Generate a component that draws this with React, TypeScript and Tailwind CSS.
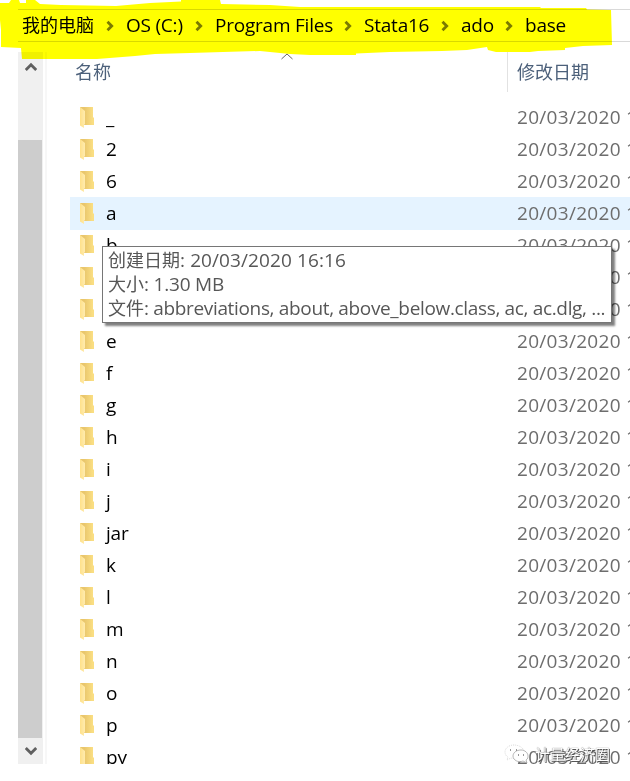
const FOLDERS = [
  "_", "2", "6", "a", "b", "c", "d", "e", "f", "g", "h",
  "i", "j", "jar", "k", "l", "m", "n", "o", "p", "py",
];

const CRUMBS = [
  { label: "OS (C:)", width: "w-[58px]" },
  { label: "Program Files", width: "w-[118px]" },
  { label: "Stata16", width: "w-[66px]" },
  { label: "ado", width: "w-[33px]" },
  { label: "base", width: "w-[40px]" },
];

function Separator() {
  return (
    <svg width="31" height="12" viewBox="0 0 31 12" className="shrink-0">
      <path d="M12.5 1.8 16.7 6l-4.2 4.2" fill="none" stroke="#7b7b7b" strokeWidth="2.8" />
    </svg>
  );
}

function Folder() {
  return (
    <svg width="15" height="22" viewBox="0 0 15 22" className="shrink-0">
      <defs>
        <linearGradient id="back" x1="0" x2="1">
          <stop offset="0.3" stopColor="#e9c66c" />
          <stop offset="0.9" stopColor="#fade82" />
        </linearGradient>
        <linearGradient id="front" x1="0" x2="1">
          <stop offset="0" stopColor="#ffe18a" />
          <stop offset="1" stopColor="#ffebae" />
        </linearGradient>
      </defs>
      <path d="M0 0h13v10l1 1v7H3z" fill="url(#back)" />
      <path d="M0 0 5 4v13.500H4V21l-4-2.500z" fill="url(#front)" />
    </svg>
  );
}

function Arrow({ down = false }: { down?: boolean }) {
  return (
    <svg width="12" height="10" viewBox="0 0 12 10" className={down ? "rotate-180" : ""}>
      <path d="M.8 8 6 2.8 11.2 8" fill="none" stroke="#606060" strokeWidth="2.8" />
    </svg>
  );
}

function AddressBar() {
  return (
    <div className="ml-[18px] mt-[9px] flex h-[33px] shrink-0 items-center whitespace-nowrap border-y border-[#d9d9d9] pl-1 text-[19px] text-black">
      <span className="w-[73px] shrink-0 text-[18px]">我的电脑</span>
      {CRUMBS.map(({ label, width }) => (
        <div key={label} className="flex shrink-0 items-center">
          <Separator />
          <span className={`${width} tracking-[-0.22px]`}>{label}</span>
        </div>
      ))}
    </div>
  );
}

function Highlighter() {
  return (
    <svg width="630" height="64" viewBox="0 0 630 64" className="pointer-events-none absolute left-0 top-0 mix-blend-multiply">
      <path
        fill="#ffff00"
        d="M0 3H9L11 0H19L20 3H26V0H35L40 4L61 5L116 6L150 3L181 1.500V0H220L221 4L270 5L300 7H540L541 8H586L587 9.500L611 10L612 45L583 46L565 48V50L538 51L530 52H496L488 50L487 47L467 50L442 51L390 52L356 53.500V55H310L290 54L260 51L190 53L155 54L135 56L97 59H22L21 48L1 47V30L0 20Z"
      />
    </svg>
  );
}

function ScrollBar() {
  return (
    <div className="flex w-[25px] shrink-0 flex-col bg-[#f0f0f0]">
      <div className="flex h-[88px] justify-center pt-[10px]"><Arrow /></div>
      <div className="h-[598px] w-6 bg-[#cdcdcd]" />
      <div className="flex h-[26px] justify-center pt-2"><Arrow down /></div>
    </div>
  );
}

function Tooltip() {
  return (
    <div className="absolute left-[102px] top-[246px] h-[77px] w-[510px] whitespace-nowrap border border-[#767676] bg-white pl-[5px] pt-px text-[19px] leading-6 text-[#575757] shadow-[3px_3px_2px_rgba(0,0,0,0.5)]">
      <div className="h-6 tracking-[0.1px]"><span className="text-[18px] tracking-normal">创建日期</span>: 20/03/2020 16:16</div>
      <div className="h-6 tracking-[-0.2px]"><span className="text-[18px] tracking-normal">大小</span>: 1.30 MB</div>
      <div className="h-6 tracking-[-0.34px]"><span className="text-[18px] tracking-normal">文件</span>: abbreviations, about, above_below.class, ac, ac.dlg, ...</div>
    </div>
  );
}

function Watermark() {
  return (
    <div className="absolute left-[504px] top-[742px] flex items-center gap-[3px]">
      <svg width="28" height="24" viewBox="0 0 28 24" fill="#fff" stroke="#999" strokeWidth=".7">
        <path d="M10 3C5 3 1 6 1 10c0 2 1 4 3 5l-1 3 4-2c8 2 13-2 13-6s-5-7-10-7z" stroke="#ccc" strokeDasharray="1 1" />
        <path d="M17 8c-5 0-8 3-8 6 0 4 5 7 10 5l4 2-1-3c2-1 2-3 2-4 0-3-3-6-7-6z" />
        <path d="M6 8h1m5 0h1m1 5h1m4 0h1" stroke="#777" strokeWidth="1.500" />
      </svg>
      <span className="text-[15px] leading-6 text-white [text-shadow:1px_1px_0_#555,0_0_1px_#444]">计量经济圈</span>
    </div>
  );
}

export default function App() {
  return (
    <div className="relative flex h-[781px] w-[630px] flex-col overflow-hidden bg-white font-['Open_Sans','Noto_Sans_CJK_SC',sans-serif]">
      <AddressBar />
      <div className="ml-[18px] mt-[10px] flex h-[712px] shrink-0 overflow-hidden">
        <ScrollBar />
        <div className="ml-0.5 w-0.5 shrink-0 bg-[#f7f7f7]" />
        <div className="ml-[23px] w-[560px] shrink-0">
          <div className="flex h-[49px] text-[18px] leading-[41px] text-[#4c607a]">
            <div className="relative h-10 w-[438px] shrink-0 border-r border-[#e2e2e2] pl-[5px]">
              名称
              <svg width="12" height="7" viewBox="0 0 12 7" className="absolute left-[211px] top-px">
                <path d="m.5 6 5.500-5 5.500 5" fill="none" stroke="#666" />
              </svg>
            </div>
            <div className="pl-[9px]">修改日期</div>
          </div>
          {FOLDERS.map((name) => (
            <div
              key={name}
              className={`flex h-8 text-[19px] leading-8 ${name === "a" ? "bg-[#e5f3ff] shadow-[0_1px_0_#e5f3ff]" : ""}`}
            >
              <div className="flex w-[447px] shrink-0 pl-[10px] pt-[6px]">
                <Folder />
                <span className="-mt-[6px] ml-[11px] tracking-[-0.2px] text-black">{name}</span>
              </div>
              <span className="shrink-0 whitespace-pre tracking-[0.3px] text-[#6d6d6d]">20/03/2020 16:16</span>
            </div>
          ))}
        </div>
      </div>
      <Tooltip />
      <Highlighter />
      <Watermark />
    </div>
  );
}
